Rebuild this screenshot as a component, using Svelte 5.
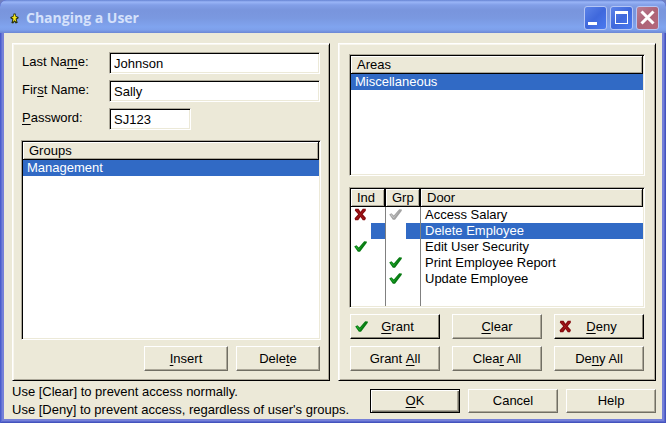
<script>
	let lastName = $state('Johnson');
	let firstName = $state('Sally');
	let password = $state('SJ123');

	let group = $state('Management');
	let area = $state('Miscellaneous');
	let door = $state('Delete Employee');

	const groups = ['Management'];
	const areas = ['Miscellaneous'];

	let doors = $state([
		{ name: 'Access Salary', ind: 'deny', grp: 'dim' },
		{ name: 'Delete Employee', ind: '', grp: '' },
		{ name: 'Edit User Security', ind: 'grant', grp: '' },
		{ name: 'Print Employee Report', ind: '', grp: 'grant' },
		{ name: 'Update Employee', ind: '', grp: 'grant' }
	]);

	function setOne(value) {
		const row = doors.find((d) => d.name === door);
		if (row) row.ind = value;
	}

	function setAll(value) {
		for (const d of doors) d.ind = value;
	}
</script>

{#snippet mark(kind)}
	{#if kind === 'deny'}
		<svg class="mark" viewBox="0 0 13 13" aria-label="denied">
			<path d="M1.3.8h3.2l2 2.9L8.8.8h3v1.9L8.7 6.2l3.3 3.9-1 2.1H8.8L6.5 8.9 4.2 12.2H1.1L.6 10.3l3.6-4L.8 2.6z" fill="#850a0e" />
			<path d="M2.5 2l7.5 9M10.3 2L2.5 11" stroke="#ac181c" stroke-width="1" fill="none" />
		</svg>
	{:else if kind}
		<svg class="mark" class:dim={kind === 'dim'} viewBox="0 0 13 13" aria-label="granted">
			<path class="shade" d="M.2 6.6L2.4 5.2l2.4 2.4L10.2 1.2l2.6.4v1.2L6 11.8H3.9z" />
			<path class="tint" d="M1.2 6.9l1.2-.6 2.3 2.9 6-7-5.9 8z" />
		</svg>
	{/if}
{/snippet}

<div class="window">
	<header class="titlebar">
		<svg class="app-icon" viewBox="0 0 10 12" aria-hidden="true">
			<path d="M4 .5h2.2l.6 2.6 2.7 1.2v1.4L7.4 7l1.2 3.8-2.3.7-1.3-2-1.5 2-2-.6L2.7 7 .5 5.6V4.3l2.8-1z" fill="#26310f" />
			<path d="M4.4 1.5h1.2l.6 2.6 2 .8-2 1.4.9 3.5L5 8 3.2 10l.6-3.7-2-1.4 2.1-.8z" fill="#f4e51c" />
		</svg>
		<h1>Changing a User</h1>
		<div class="captions">
			<button class="caption" aria-label="Minimize">
				<svg viewBox="0 0 21 22"><path d="M3 15h9v3H3z" fill="#fff" /></svg>
			</button>
			<button class="caption" aria-label="Maximize">
				<svg viewBox="0 0 21 22"><path d="M4 4h13v13H4zM5 7v9h11V7z" fill="#fff" fill-rule="evenodd" /></svg>
			</button>
			<button class="caption close" aria-label="Close">
				<svg viewBox="0 0 21 22"><path d="M4.5 4.5l12 12M16.5 4.5l-12 12" stroke="#fff" stroke-width="3" /></svg>
			</button>
		</div>
	</header>

	<main>
		<section class="panel user">
			<div class="fields">
				<label for="last">Last Na<u>m</u>e:</label>
				<input id="last" bind:value={lastName} />
				<label for="first">Fir<u>s</u>t Name:</label>
				<input id="first" bind:value={firstName} />
				<label for="pass"><u>P</u>assword:</label>
				<input id="pass" class="short" bind:value={password} />
			</div>

			<div class="listbox">
				<table>
					<thead><tr><th>Groups</th></tr></thead>
					<tbody>
						{#each groups as g}
							<tr class:selected={g === group} onclick={() => (group = g)}><td>{g}</td></tr>
						{/each}
					</tbody>
				</table>
			</div>

			<div class="pair">
				<button class="btn"><u>I</u>nsert</button>
				<button class="btn">Dele<u>t</u>e</button>
			</div>
		</section>

		<section class="panel access">
			<div class="listbox">
				<table>
					<thead><tr><th>Areas</th></tr></thead>
					<tbody>
						{#each areas as a}
							<tr class:selected={a === area} onclick={() => (area = a)}><td>{a}</td></tr>
						{/each}
					</tbody>
				</table>
			</div>

			<div class="listbox doors">
				<table>
					<colgroup><col class="flag" /><col class="flag" /><col /></colgroup>
					<thead><tr><th>Ind</th><th>Grp</th><th>Door</th></tr></thead>
					<tbody>
						{#each doors as d}
							<tr class:selected={d.name === door} onclick={() => (door = d.name)}>
								<td><span class="cell">{@render mark(d.ind)}</span></td>
								<td><span class="cell">{@render mark(d.grp)}</span></td>
								<td>{d.name}</td>
							</tr>
						{/each}
					</tbody>
				</table>
			</div>

			<div class="grid">
				<button class="btn strong" onclick={() => setOne('grant')}>{@render mark('grant')}<span><u>G</u>rant</span></button>
				<button class="btn" onclick={() => setOne('')}><u>C</u>lear</button>
				<button class="btn strong" onclick={() => setOne('deny')}>{@render mark('deny')}<span><u>D</u>eny</span></button>
				<button class="btn" onclick={() => setAll('grant')}>Grant <u>A</u>ll</button>
				<button class="btn" onclick={() => setAll('')}>Clea<u>r</u> All</button>
				<button class="btn" onclick={() => setAll('deny')}>De<u>n</u>y All</button>
			</div>
		</section>
	</main>

	<footer>
		<p>
			Use [Clear] to prevent access normally.<br />
			Use [Deny] to prevent access, regardless of user's groups.
		</p>
		<button class="btn default"><u>O</u>K</button>
		<button class="btn">Cancel</button>
		<button class="btn">Help</button>
	</footer>
</div>

<style>
	:global(body) {
		background: #6f7fc0;
	}

	.window,
	.window * {
		box-sizing: border-box;
	}

	.window {
		display: flex;
		flex-direction: column;
		min-height: 100vh;
		padding: 0 4px 4px;
		border-radius: 7px 7px 0 0;
		background: #7580d8;
		box-shadow: inset 1px 0 #4a5ccc, inset -1px -1px #4453bd, inset 2px 0 #5f70d4, inset -2px -2px #5a68cd;
		font-family: 'Liberation Sans', Arial, sans-serif;
		font-size: 13px;
		line-height: 16px;
		color: #000;
	}

	.titlebar {
		display: flex;
		align-items: center;
		height: 33px;
		margin: 0 -4px;
		padding: 3px 7px 0 10px;
		border-radius: 7px 7px 0 0;
		background: linear-gradient(#6583d2 0, #9ab5f7 2px, #829fe8 5px, #7995dd 10px, #7a98e0 18px, #80a4ef 27px, #7d9fea 30px, #6c86d4 33px);
	}

	.app-icon {
		width: 9px;
		height: 11px;
	}

	h1 {
		flex: 1;
		margin: 0 0 0 7px;
		font-family: 'Open Sans', sans-serif;
		font-size: 14px;
		font-weight: 700;
		color: #d5e1fb;
	}

	.captions {
		display: flex;
		gap: 3px;
	}

	.caption {
		width: 23px;
		height: 24px;
		padding: 0;
		border: 1px solid #b5c6f5;
		border-radius: 3px;
		background: linear-gradient(135deg, #5c83e8, #3f68dc 50%, #4b7af0);
	}

	.caption.close {
		background: linear-gradient(135deg, #bb7f94, #ad6377 50%, #b4687c);
	}

	.caption svg {
		display: block;
		width: 21px;
		height: 22px;
	}

	main {
		flex: 1;
		display: grid;
		grid-template-columns: 1fr 1fr;
		gap: 8px;
		padding: 10px 6px 0 8px;
		background: #ece9d8;
	}

	.panel {
		display: flex;
		flex-direction: column;
		border: 1px solid;
		border-color: #fff #000 #000 #fff;
		box-shadow: inset 1px 1px #f8f6ee, inset -1px -1px #aca899;
	}

	.user {
		padding: 8px 8px 9px;
	}

	.access {
		padding: 10px 10px 9px;
	}

	.fields {
		display: grid;
		grid-template-columns: 87px 1fr;
		gap: 6px 0;
		padding: 0 1px;
		margin-bottom: 10px;
	}

	.fields label {
		padding-top: 2px;
	}

	input {
		width: 100%;
		height: 22px;
		padding: 1px 3px 0 4px;
		border: 1px solid;
		border-color: #aca899 #fff #fff #aca899;
		box-shadow: inset 1px 1px #000, inset -1px -1px #ece9d8;
		background: #fff;
		font: inherit;
		outline: none;
	}

	input.short {
		width: 82px;
	}

	.listbox {
		flex: 1;
		padding: 1px;
		border: 1px solid;
		border-color: #aca899 #fff #fff #aca899;
		box-shadow: inset 1px 1px #000, inset -1px -1px #ece9d8;
		background: #fff;
	}

	table {
		width: 100%;
		table-layout: fixed;
		border-collapse: separate;
		border-spacing: 0;
	}

	th {
		height: 18px;
		padding: 1px 6px 0;
		border-right: 1px solid #000;
		border-bottom: 1px solid #000;
		box-shadow: inset 1px 1px #fff, inset -1px -1px #aca899;
		background: #ece9d8;
		font-weight: 400;
		text-align: left;
	}

	td {
		height: 16px;
		padding: 0 4px;
		line-height: 16px;
		white-space: nowrap;
		cursor: default;
	}

	.selected td {
		background: #316ac5;
		color: #fff;
	}

	/* column rules run down to the foot of the list */
	.doors {
		margin: 11px 0 6px;
		background:
			linear-gradient(#808080, #808080) 35px 0 / 1px 100% no-repeat,
			linear-gradient(#808080, #808080) 70px 0 / 1px 100% no-repeat,
			#fff;
	}

	.flag {
		width: 35px;
	}

	.doors th:not(:last-child) {
		border-right-width: 2px;
	}

	.doors td:not(:last-child) {
		padding: 0;
		border-right: 1px solid #808080;
	}

	.cell {
		display: flex;
		align-items: center;
		width: 20px;
		height: 16px;
		padding-left: 3px;
		background: #fff;
	}

	.mark {
		flex: none;
		width: 13px;
		height: 13px;
	}

	.shade {
		fill: #087a12;
	}

	.tint {
		fill: #1fae2c;
	}

	.dim .shade {
		fill: #a2a2a2;
	}

	.dim .tint {
		fill: #c8c8c8;
	}

	.btn {
		display: flex;
		align-items: center;
		justify-content: center;
		height: 25px;
		padding: 0;
		border: 1px solid;
		border-color: #fff #716f64 #716f64 #fff;
		box-shadow: inset -1px -1px #aca899;
		background: #ece9d8;
		font: inherit;
		color: inherit;
		white-space: pre;
	}

	.strong {
		justify-content: flex-start;
		border-color: #fff #000 #000 #fff;
		box-shadow: inset -1px -1px #858274;
	}

	.strong .mark {
		margin-left: 4px;
	}

	.strong span {
		flex: 1;
		padding-right: 14px;
		padding-left: 2px;
		text-align: center;
	}

	.default {
		border-color: #000;
		box-shadow: inset 1px 1px #fff, inset -1px -1px #716f64, inset -2px -2px #aca899;
	}

	u {
		text-decoration: underline;
		text-underline-offset: 2px;
	}

	.pair {
		display: flex;
		justify-content: flex-end;
		gap: 8px;
		padding: 6px 1px 0;
	}

	.pair .btn {
		width: 84px;
	}

	.grid {
		display: grid;
		grid-template-columns: repeat(3, 1fr);
		gap: 7px 12px;
		padding: 0 1px;
	}

	footer {
		display: flex;
		gap: 8px;
		padding: 0 6px 6px 8px;
		background: #ece9d8;
	}

	footer p {
		flex: 1;
		margin: 2px 0 -6px;
		line-height: 18px;
		white-space: nowrap;
	}

	footer .btn {
		flex: none;
		width: 90px;
		height: 24px;
		margin-top: 8px;
	}
</style>
